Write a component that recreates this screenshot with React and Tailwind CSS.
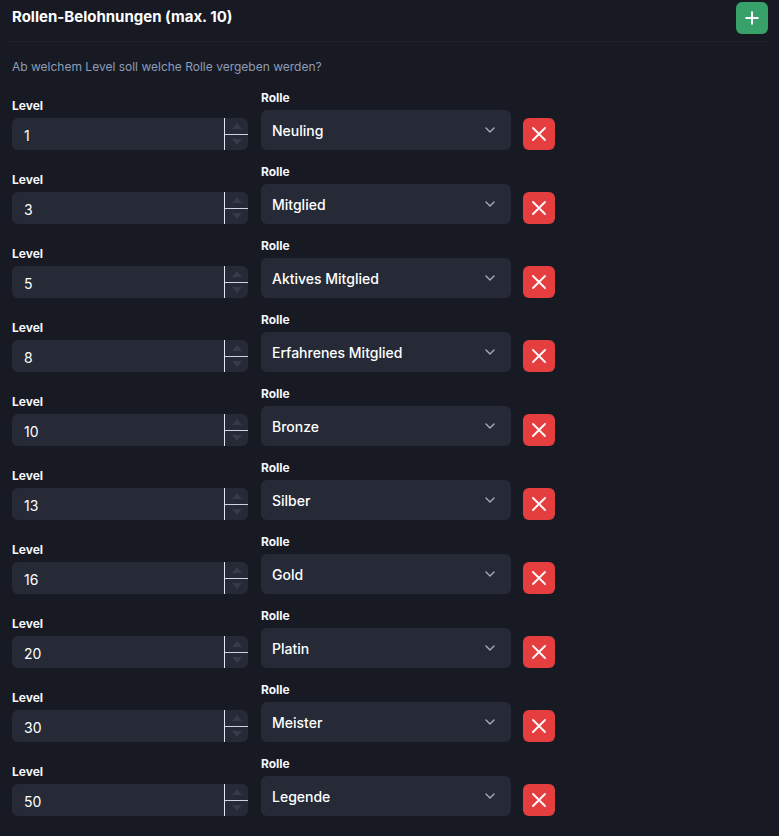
import { useState } from "react";

const initialRewards = [
  { level: 1, role: "Neuling" },
  { level: 3, role: "Mitglied" },
  { level: 5, role: "Aktives Mitglied" },
  { level: 8, role: "Erfahrenes Mitglied" },
  { level: 10, role: "Bronze" },
  { level: 13, role: "Silber" },
  { level: 16, role: "Gold" },
  { level: 20, role: "Platin" },
  { level: 30, role: "Meister" },
  { level: 50, role: "Legende" },
];

function Stepper() {
  return (
    <div className="w-6 flex flex-col border-l border-[#e2e8f0]">
      <div className="flex-1 flex items-center justify-center border-b border-[#cbd5e0]">
        <svg width="10" height="6" viewBox="0 0 10 6">
          <path d="M5 0 L10 6 L0 6 Z" fill="#353b49" />
        </svg>
      </div>
      <div className="flex-1 flex items-center justify-center">
        <svg width="10" height="6" viewBox="0 0 10 6">
          <path d="M0 0 L10 0 L5 6 Z" fill="#353b49" />
        </svg>
      </div>
    </div>
  );
}

function RewardRow({ reward, onRemove }) {
  return (
    <div className="flex items-end">
      {/* Level */}
      <div className="w-[236px]">
        <label className="block text-xs leading-4 font-bold text-[#f4f6fa] mb-1">
          Level
        </label>
        <div className="h-8 flex rounded-md bg-[#252a36] overflow-hidden">
          <input
            type="text"
            defaultValue={reward.level}
            className="flex-1 min-w-0 bg-transparent pl-3 pt-[3px] text-sm text-white outline-none"
          />
          <Stepper />
        </div>
      </div>

      {/* Rolle */}
      <div className="w-[250px] ml-[13px]">
        <label className="block text-xs leading-4 font-bold text-[#f4f6fa] mb-1">
          Rolle
        </label>
        <div className="h-10 flex items-center justify-between rounded-md bg-[#252a36] pl-[11px] pr-[16px]">
          <span className="text-sm font-medium text-white pt-[2px]">{reward.role}</span>
          <svg width="10" height="6" viewBox="0 0 10 6" fill="none">
            <path
              d="M1 1 L5 5 L9 1"
              stroke="#a0aec0"
              strokeWidth="1.4"
              strokeLinecap="round"
              strokeLinejoin="round"
            />
          </svg>
        </div>
      </div>

      {/* Delete */}
      <button
        onClick={onRemove}
        className="ml-3 w-8 h-8 rounded-md bg-[#e53e3e] flex items-center justify-center"
      >
        <svg width="16" height="16" viewBox="0 0 16 16" fill="none">
          <path
            d="M2 2 L14 14 M14 2 L2 14"
            stroke="white"
            strokeWidth="1.8"
            strokeLinecap="round"
          />
        </svg>
      </button>
    </div>
  );
}

export default function App() {
  const [rewards, setRewards] = useState(initialRewards);

  const removeReward = (i) => {
    setRewards(rewards.filter((_, idx) => idx !== i));
  };

  return (
    <div
      className="min-h-screen bg-[#171a23] text-white"
      style={{ fontFamily: "Inter, 'Noto Sans', sans-serif" }}
    >
      {/* Header */}
      <div className="flex items-center justify-between pl-3 pr-[11px] pt-[1px] h-[34px]">
        <h2 className="text-[15px] font-bold text-white">
          Rollen-Belohnungen (max. 10)
        </h2>
        <button className="w-8 h-8 rounded-md bg-[#38a169] flex items-center justify-center">
          <svg width="16" height="16" viewBox="0 0 16 16" fill="none">
            <path
              d="M8 1.5 V14.5 M1.5 8 H14.5"
              stroke="white"
              strokeWidth="2"
            />
          </svg>
        </button>
      </div>
      <div className="mx-2 mt-[7px] border-t border-[#1e222c]" />

      <p className="px-3 mt-[17px] text-xs leading-4 text-[#8d9cb8]">
        Ab welchem Level soll welche Rolle vergeben werden?
      </p>

      {/* Rows */}
      <div className="px-3 mt-[15px] flex flex-col gap-[14px] pb-5">
        {rewards.map((reward, i) => (
          <RewardRow
            key={reward.level}
            reward={reward}
            onRemove={() => removeReward(i)}
          />
        ))}
      </div>
    </div>
  );
}
